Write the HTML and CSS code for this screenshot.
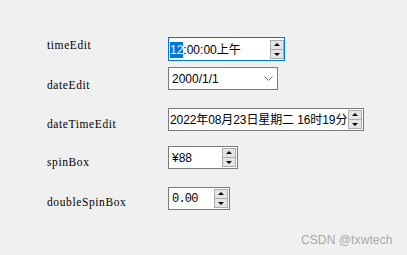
FILE: index.html
```html
<!DOCTYPE html>
<html lang="zh-CN">
  <head>
    <meta charset="UTF-8" />
    <title>Qt widgets</title>
    <link rel="stylesheet" href="styles.css">
  </head>
  <body>
    <div class="form">
      <div class="row row-time">
        <span class="label">timeEdit</span>
        <div class="field field-time focused">
          <span class="value"><span class="sel">12</span>:00:00上午</span>
          <div class="spin">
            <span class="btn up"></span>
            <span class="btn down"></span>
          </div>
        </div>
      </div>

      <div class="row row-date">
        <span class="label">dateEdit</span>
        <div class="field field-date">
          <span class="value">2000/1/1</span>
          <svg class="chevron" width="9" height="5" viewBox="0 0 9 5">
            <path d="M0.5 0.5 L4.5 4.5 L8.5 0.5" fill="none" stroke="#6b6b6b" stroke-width="1" />
          </svg>
        </div>
      </div>

      <div class="row row-datetime">
        <span class="label">dateTimeEdit</span>
        <div class="field field-datetime">
          <span class="value">2022年08月23日星期二 16时19分</span>
          <div class="spin">
            <span class="btn up"></span>
            <span class="btn down"></span>
          </div>
        </div>
      </div>

      <div class="row row-spin">
        <span class="label">spinBox</span>
        <div class="field field-spin">
          <span class="value">¥88</span>
          <div class="spin">
            <span class="btn up"></span>
            <span class="btn down"></span>
          </div>
        </div>
      </div>

      <div class="row row-double">
        <span class="label">doubleSpinBox</span>
        <div class="field field-double">
          <span class="value mono">0.00</span>
          <div class="spin">
            <span class="btn up"></span>
            <span class="btn down"></span>
          </div>
        </div>
      </div>
    </div>

    <div class="watermark">CSDN @txwtech</div>
  </body>
</html>
```

FILE: styles.css
```css
html,
body {
  margin: 0;
  height: 100%;
}
body {
  background: #f0f0f0;
  font-family: "Liberation Sans", "Noto Sans CJK SC", sans-serif;
  font-size: 12px;
  position: relative;
  overflow: hidden;
}
.form {
  padding: 37px 0 0 47px;
}
.row {
  display: flex;
  align-items: flex-start;
  height: 24px;
}
.row-date {
  margin-top: 6px;
}
.row-datetime {
  margin-top: 17px;
}
.row-spin {
  margin-top: 14px;
}
.row-double {
  margin-top: 17px;
}
.label {
  width: 121px;
  flex: none;
  font-family: "Liberation Serif", serif;
  font-size: 11.5px;
  letter-spacing: 0.6px;
  line-height: 12px;
  color: #000;
}
.row-time .label {
  margin-top: 2px;
}
.row-date .label {
  margin-top: 12px;
}
.row-datetime .label {
  margin-top: 10px;
}
.row-spin .label {
  margin-top: 10px;
}
.row-double .label {
  margin-top: 9px;
}
.field {
  display: flex;
  align-items: stretch;
  height: 23px;
  box-sizing: border-box;
  border: 1px solid #7a7a7a;
  background: #fff;
  padding: 1px 1px 1px 0;
}
.field.focused {
  border-color: #0078d7;
  height: 24px;
  padding: 2px 0 1px 0;
}
.field-time {
  width: 117px;
}
.field-date {
  width: 110px;
  align-items: center;
  padding-right: 4px;
}
.field-datetime {
  width: 196px;
}
.field-spin {
  width: 70px;
}
.field-double {
  width: 62px;
}
.value {
  flex: 1;
  display: flex;
  align-items: center;
  padding-left: 3px;
  white-space: pre;
  color: #000;
  line-height: 14px;
}
.field-time .value {
  padding-left: 1px;
}
.field-datetime .value {
  padding-left: 1px;
  letter-spacing: -0.1px;
}
.mono {
  font-family: "Liberation Mono", monospace;
  font-size: 12px;
  letter-spacing: -0.8px;
}
.sel {
  background: #0078d7;
  color: #fff;
  padding: 1px 0;
}
.chevron {
  flex: none;
}
.spin {
  display: flex;
  flex-direction: column;
  width: 14px;
  flex: none;
}
.btn {
  flex: 1;
  position: relative;
  background: #e5e5e5;
  border: 1px solid #acacac;
  box-sizing: border-box;
}
.btn + .btn {
  border-top: none;
}
.btn::after {
  content: "";
  position: absolute;
  left: 50%;
  top: 50%;
  margin-left: -3px;
  border-left: 3px solid transparent;
  border-right: 3px solid transparent;
}
.up::after {
  margin-top: -2px;
  border-bottom: 3px solid #000;
}
.down::after {
  margin-top: -1px;
  border-top: 3px solid #000;
}
.watermark {
  position: absolute;
  left: 301px;
  top: 233px;
  color: #a9a9a9;
  font-size: 12px;
  letter-spacing: 0.1px;
}
```
